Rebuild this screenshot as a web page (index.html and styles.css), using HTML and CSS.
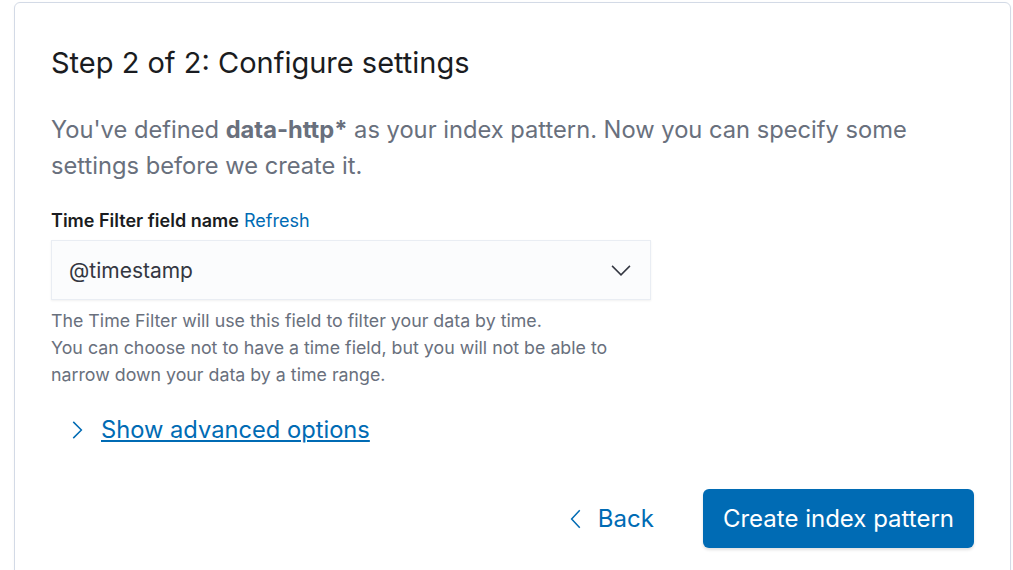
FILE: index.html
```html
<!DOCTYPE html>
<html>
<head>
<meta charset="utf-8">
<link rel="stylesheet" href="styles.css">
</head>
<body>
<div class="panel">
  <h1 class="title">Step 2 of 2: Configure settings</h1>
  <p class="intro">You've defined <strong>data-http*</strong> as your index pattern. Now you can specify some settings before we create it.</p>
  <div class="field">
    <div class="label-row"><span class="label">Time Filter field name</span> <a class="refresh">Refresh</a></div>
    <div class="select">
      <span class="select-value">@timestamp</span>
      <svg class="select-arrow" width="22" height="22" viewBox="0 0 16 16"><path d="M1.5 5 L8 11.5 L14.5 5" fill="none" stroke="#343741" stroke-width="1.1"/></svg>
    </div>
    <div class="help">
      <div>The Time Filter will use this field to filter your data by time.</div>
      <div>You can choose not to have a time field, but you will not be able to narrow down your data by a time range.</div>
    </div>
  </div>
  <div class="advanced">
    <svg class="adv-arrow" width="20" height="20" viewBox="0 0 16 16"><path d="M5 1.5 L11.5 8 L5 14.5" fill="none" stroke="#006bb4" stroke-width="1.2"/></svg>
    <a class="adv-link">Show advanced options</a>
  </div>
  <div class="actions">
    <button class="btn-empty"><svg width="20" height="22" viewBox="0 0 16 16"><path d="M11 1 L4.5 8 L11 15" fill="none" stroke="#006bb4" stroke-width="1.2"/></svg><span>Back</span></button>
    <button class="btn-primary">Create index pattern</button>
  </div>
</div>
</body>
</html>
```

FILE: styles.css
```css
* { box-sizing: border-box; }
html, body { margin: 0; padding: 0; background: #fff; }
body {
  font-family: Inter, "Noto Sans", sans-serif;
  color: #1a1c21;
  overflow: hidden;
  height: 570px;
}
.panel {
  margin: 2px 0 0 14px;
  width: 997px;
  height: 600px;
  border: 1px solid #d3dae6;
  border-radius: 6px;
  padding: 36px 36px;
  box-shadow: 0 1px 3px rgba(0,0,0,0.04);
}
.title {
  margin: 0;
  font-size: 29px;
  font-weight: 400;
  line-height: 48px;
  color: #1a1c21;
}
.intro {
  margin: 25px 0 0 0;
  font-size: 23.7px;
  line-height: 36px;
  color: #69707d;
  max-width: 900px;
}
.intro strong { font-weight: 700; }
.field { margin-top: 25px; width: 600px; }
.label-row {
  font-size: 18px;
  line-height: 24px;
}
.label { font-weight: 600; }
.refresh { color: #006bb4; }
.select {
  margin-top: 7px;
  height: 60px;
  background: #fbfcfd;
  border: 1px solid #e9edf3;
  box-shadow: 0 1px 2px rgba(0,0,0,0.06);
  display: flex;
  align-items: center;
  justify-content: space-between;
  padding: 0 18px 0 17px;
}
.select-value { font-size: 21px; color: #343741; }
.help {
  margin-top: 7px;
  font-size: 17.8px;
  line-height: 27px;
  color: #69707d;
  width: 590px;
}
.advanced {
  margin-top: 24px;
  display: flex;
  align-items: center;
  padding-left: 16px;
}
.adv-arrow { margin-right: 14px; }
.adv-link {
  color: #006bb4;
  text-decoration: underline;
  font-size: 23.7px;
  line-height: 36px;
}
.actions {
  margin-top: 41px;
  display: flex;
  justify-content: flex-end;
  align-items: center;
  gap: 49px;
}
.btn-empty {
  background: none;
  border: none;
  display: flex;
  align-items: center;
  gap: 12px;
  font-family: inherit;
  font-size: 24px;
  color: #006bb4;
  padding: 0;
}
.btn-primary {
  background: #006bb4;
  color: #fff;
  border: none;
  border-radius: 6px;
  height: 59px;
  padding: 0 20px;
  font-family: inherit;
  font-size: 24px;
  box-shadow: 0 2px 3px rgba(0,0,0,0.12);
}
```
